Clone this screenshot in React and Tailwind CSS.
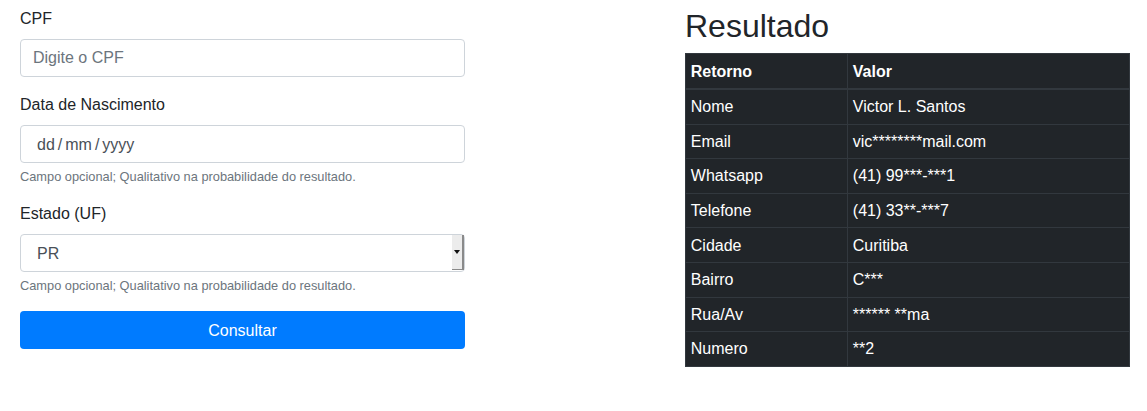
const font = { fontFamily: '"Liberation Sans", Arial, sans-serif' };

const rows = [
  ["Nome", "Victor L. Santos"],
  ["Email", "vic********mail.com"],
  ["Whatsapp", "(41) 99***-***1"],
  ["Telefone", "(41) 33**-***7"],
  ["Cidade", "Curitiba"],
  ["Bairro", "C***"],
  ["Rua/Av", "****** **ma"],
  ["Numero", "**2"],
];

const fieldCls =
  "flex items-center w-full h-[38px] border border-[#ced4da] rounded-[4px] bg-white text-base leading-6";

function Label({ children }) {
  return <label className="block mb-2 text-base leading-6 text-[#212529]">{children}</label>;
}

function Help() {
  return (
    <small className="block mt-1 text-[12.8px] leading-[19.2px] text-[#6c757d]">
      Campo opcional; Qualitativo na probabilidade do resultado.
    </small>
  );
}

export default function App() {
  return (
    <div style={font} className="w-[1147px] h-[411px] bg-white flex pl-[20px] pt-[7px] gap-[220px] text-[#212529]">
      {/* form */}
      <div className="w-[445px]">
        <div className="mb-4">
          <Label>CPF</Label>
          <input
            className={`${fieldCls} px-3 outline-none placeholder-[#6c757d] text-[#495057]`}
            placeholder="Digite o CPF"
            style={font}
          />
        </div>

        <div className="mb-4">
          <Label>Data de Nascimento</Label>
          <div className={`${fieldCls} pl-[16px] pt-[2px] gap-[3px] text-[#495057]`}>
            <span>dd</span>
            <span>/</span>
            <span>mm</span>
            <span>/</span>
            <span>yyyy</span>
          </div>
          <Help />
        </div>

        <div className="mb-4">
          <Label>Estado (UF)</Label>
          <div className={`${fieldCls} pl-[16px] pt-[1px] text-[#495057] relative`}>
            PR
            <div className="absolute right-[0px] top-[0px] bottom-[1px] w-[12px] bg-[#ececec] border-r-2 border-b border-[#8a8a8a] flex items-center justify-center">
              <svg width="6" height="4" viewBox="0 0 6 4">
                <path d="M0 0h6L3 4z" fill="#111" />
              </svg>
            </div>
          </div>
          <Help />
        </div>

        <button className="w-full h-[38px] pt-[1px] rounded-[4px] bg-[#007bff] text-white text-base leading-6">
          Consultar
        </button>
      </div>

      {/* result */}
      <div className="w-[445px]">
        <h2 className="text-[32px] leading-[38.4px] mb-2 font-normal">Resultado</h2>
        <table className="w-full border-collapse bg-[#212529] text-white text-base leading-6">
          <thead>
            <tr>
              <th className="w-[162px] text-left font-bold px-[4.8px] pt-[5.3px] pb-[4.3px] border border-[#32383e] border-b-2">Retorno</th>
              <th className="text-left font-bold px-[4.8px] pt-[5.3px] pb-[4.3px] border border-[#32383e] border-b-2">Valor</th>
            </tr>
          </thead>
          <tbody>
            {rows.map(([k, v]) => (
              <tr key={k}>
                <td className="px-[4.8px] pt-[5.3px] pb-[4.3px] border border-[#32383e]">{k}</td>
                <td className="px-[4.8px] pt-[5.3px] pb-[4.3px] border border-[#32383e]">{v}</td>
              </tr>
            ))}
          </tbody>
        </table>
      </div>
    </div>
  );
}
